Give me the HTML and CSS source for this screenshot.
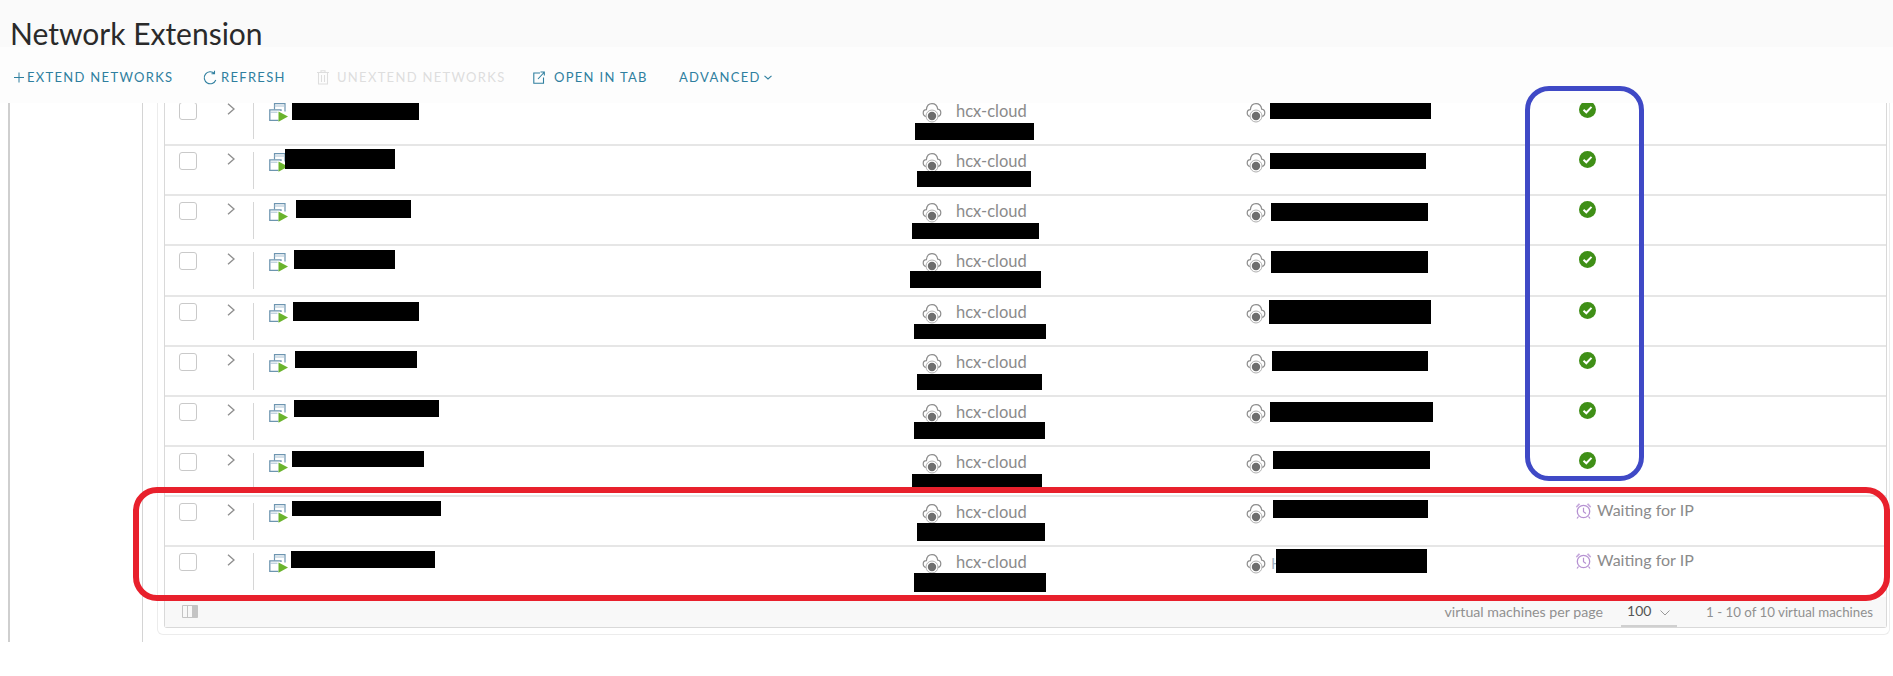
FILE: index.html
```html
<!DOCTYPE html>
<html lang="en">
<head>
<meta charset="utf-8">
<title>Network Extension</title>
<link rel="stylesheet" href="styles.css">
</head>
<body>
<svg class="defs" width="0" height="0" aria-hidden="true">
  <symbol id="i-vm" viewBox="0 0 19 19">
    <path d="M5.500 6.500V.7H16V8.500" fill="none" stroke="#6d95b0" stroke-width="1.200"/>
    <path d="M5.500 3H16" stroke="#a9c1d2" stroke-width="1"/>
    <path d="M9.500 17.300H.8V6.800H12V8" fill="none" stroke="#6d95b0" stroke-width="1.300"/>
    <path d="M.8 9.200H8.500" stroke="#a9c1d2" stroke-width="1"/>
    <path d="M9.500 8.500L19 13.500L9.500 18.800Z" fill="#6ab42d"/>
  </symbol>
  <symbol id="i-cloud" viewBox="0 0 20 20">
    <path d="M4.500 13.500C2.500 13.200 1.200 11.600 1.200 9.900C1.200 8 2.600 6.700 4.400 6.600C4.800 2.800 7.200 .7 10 .7C13 .7 15.200 2.900 15.700 6.100C17.500 6.300 18.800 7.900 18.800 9.700C18.800 11.600 17.500 13.200 15.500 13.500" fill="none" stroke="#8c8c8c" stroke-width="1.200"/>
    <circle cx="10" cy="13" r="6" fill="#fff" stroke="#b0b0b0" stroke-width="1"/>
    <circle cx="10" cy="13" r="4.200" fill="#6e6e6e"/>
  </symbol>
  <symbol id="i-check" viewBox="0 0 17 17">
    <circle cx="8.500" cy="8.500" r="8.500" fill="#3f8f17"/>
    <path d="M4.500 8.800L7.300 11.300L12.500 5.900" fill="none" stroke="#fff" stroke-width="2"/>
  </symbol>
  <symbol id="i-clock" viewBox="0 0 17 17">
    <circle cx="8.500" cy="9.500" r="6.200" fill="none" stroke="#b692d2" stroke-width="1.300"/>
    <path d="M8.500 5.800V9.800L11 11.500" fill="none" stroke="#b692d2" stroke-width="1.200"/>
    <path d="M.8 4.500L3.800 1.200L5.200 2.300L1.800 5.800ZM16.200 4.500L13.200 1.200L11.800 2.300L15.200 5.800Z" fill="#c6a9dc"/>
    <path d="M3.500 14.500L2 16.500M13.500 14.500L15 16.500" stroke="#b692d2" stroke-width="1.200"/>
  </symbol>
</svg>

<div class="page">
  <header class="title-bar"><h1 class="title">Network Extension</h1></header>

  <nav class="toolbar">
    <span class="action action-extend">
      <svg class="tool-icon plus" viewBox="0 0 11 11"><path d="M5.500 0V11M0 5.500H11"/></svg>
      EXTEND NETWORKS
    </span>
    <span class="action action-refresh">
      <svg class="tool-icon refresh" viewBox="0 0 14 15"><path d="M11.500 3.500A6 6 0 1 0 12.800 10M11.500 .8V3.800H8.500"/></svg>
      REFRESH
    </span>
    <span class="action action-off">
      <svg class="tool-icon trash" viewBox="0 0 12 15"><path d="M1.500 3V14H10.500V3M0 2.500H12M4 2.500V.8H8V2.500M4.500 5V12M7.500 5V12"/></svg>
      UNEXTEND NETWORKS
    </span>
    <span class="action action-open">
      <svg class="tool-icon open" viewBox="0 0 12 13"><path d="M7 2H.8V12.200H10.500V6.500M5 8L11 1.500M7.500 1H11.300V4.500"/></svg>
      OPEN IN TAB
    </span>
    <span class="action action-advanced">
      ADVANCED
      <svg class="tool-icon caret" viewBox="0 0 8 5"><path d="M.5 .8L4 4L7.500 .8"/></svg>
    </span>
  </nav>

  <main class="main">
    <div class="rail"></div>
    <section class="card">
      <div class="table">
        <div class="row">
          <span class="cell-select"><span class="checkbox"></span></span>
          <span class="cell-expand"><svg class="chevron" viewBox="0 0 8 12"><path d="M1 .8L7 6L1 11.200"/></svg></span>
          <span class="cell-name"><svg class="icon-vm"><use href="#i-vm"/></svg></span>
          <span class="cell-cloud"><svg class="icon-cloud"><use href="#i-cloud"/></svg><span class="cloud-name">hcx-cloud</span></span>
          <span class="cell-target"><svg class="icon-cloud"><use href="#i-cloud"/></svg></span>
          <span class="cell-status"><svg class="icon-check"><use href="#i-check"/></svg></span>
        </div>
        <div class="row">
          <span class="cell-select"><span class="checkbox"></span></span>
          <span class="cell-expand"><svg class="chevron" viewBox="0 0 8 12"><path d="M1 .8L7 6L1 11.200"/></svg></span>
          <span class="cell-name"><svg class="icon-vm"><use href="#i-vm"/></svg></span>
          <span class="cell-cloud"><svg class="icon-cloud"><use href="#i-cloud"/></svg><span class="cloud-name">hcx-cloud</span></span>
          <span class="cell-target"><svg class="icon-cloud"><use href="#i-cloud"/></svg></span>
          <span class="cell-status"><svg class="icon-check"><use href="#i-check"/></svg></span>
        </div>
        <div class="row">
          <span class="cell-select"><span class="checkbox"></span></span>
          <span class="cell-expand"><svg class="chevron" viewBox="0 0 8 12"><path d="M1 .8L7 6L1 11.200"/></svg></span>
          <span class="cell-name"><svg class="icon-vm"><use href="#i-vm"/></svg></span>
          <span class="cell-cloud"><svg class="icon-cloud"><use href="#i-cloud"/></svg><span class="cloud-name">hcx-cloud</span></span>
          <span class="cell-target"><svg class="icon-cloud"><use href="#i-cloud"/></svg></span>
          <span class="cell-status"><svg class="icon-check"><use href="#i-check"/></svg></span>
        </div>
        <div class="row">
          <span class="cell-select"><span class="checkbox"></span></span>
          <span class="cell-expand"><svg class="chevron" viewBox="0 0 8 12"><path d="M1 .8L7 6L1 11.200"/></svg></span>
          <span class="cell-name"><svg class="icon-vm"><use href="#i-vm"/></svg></span>
          <span class="cell-cloud"><svg class="icon-cloud"><use href="#i-cloud"/></svg><span class="cloud-name">hcx-cloud</span></span>
          <span class="cell-target"><svg class="icon-cloud"><use href="#i-cloud"/></svg></span>
          <span class="cell-status"><svg class="icon-check"><use href="#i-check"/></svg></span>
        </div>
        <div class="row">
          <span class="cell-select"><span class="checkbox"></span></span>
          <span class="cell-expand"><svg class="chevron" viewBox="0 0 8 12"><path d="M1 .8L7 6L1 11.200"/></svg></span>
          <span class="cell-name"><svg class="icon-vm"><use href="#i-vm"/></svg></span>
          <span class="cell-cloud"><svg class="icon-cloud"><use href="#i-cloud"/></svg><span class="cloud-name">hcx-cloud</span></span>
          <span class="cell-target"><svg class="icon-cloud"><use href="#i-cloud"/></svg></span>
          <span class="cell-status"><svg class="icon-check"><use href="#i-check"/></svg></span>
        </div>
        <div class="row">
          <span class="cell-select"><span class="checkbox"></span></span>
          <span class="cell-expand"><svg class="chevron" viewBox="0 0 8 12"><path d="M1 .8L7 6L1 11.200"/></svg></span>
          <span class="cell-name"><svg class="icon-vm"><use href="#i-vm"/></svg></span>
          <span class="cell-cloud"><svg class="icon-cloud"><use href="#i-cloud"/></svg><span class="cloud-name">hcx-cloud</span></span>
          <span class="cell-target"><svg class="icon-cloud"><use href="#i-cloud"/></svg></span>
          <span class="cell-status"><svg class="icon-check"><use href="#i-check"/></svg></span>
        </div>
        <div class="row">
          <span class="cell-select"><span class="checkbox"></span></span>
          <span class="cell-expand"><svg class="chevron" viewBox="0 0 8 12"><path d="M1 .8L7 6L1 11.200"/></svg></span>
          <span class="cell-name"><svg class="icon-vm"><use href="#i-vm"/></svg></span>
          <span class="cell-cloud"><svg class="icon-cloud"><use href="#i-cloud"/></svg><span class="cloud-name">hcx-cloud</span></span>
          <span class="cell-target"><svg class="icon-cloud"><use href="#i-cloud"/></svg></span>
          <span class="cell-status"><svg class="icon-check"><use href="#i-check"/></svg></span>
        </div>
        <div class="row">
          <span class="cell-select"><span class="checkbox"></span></span>
          <span class="cell-expand"><svg class="chevron" viewBox="0 0 8 12"><path d="M1 .8L7 6L1 11.200"/></svg></span>
          <span class="cell-name"><svg class="icon-vm"><use href="#i-vm"/></svg></span>
          <span class="cell-cloud"><svg class="icon-cloud"><use href="#i-cloud"/></svg><span class="cloud-name">hcx-cloud</span></span>
          <span class="cell-target"><svg class="icon-cloud"><use href="#i-cloud"/></svg></span>
          <span class="cell-status"><svg class="icon-check"><use href="#i-check"/></svg></span>
        </div>
        <div class="row">
          <span class="cell-select"><span class="checkbox"></span></span>
          <span class="cell-expand"><svg class="chevron" viewBox="0 0 8 12"><path d="M1 .8L7 6L1 11.200"/></svg></span>
          <span class="cell-name"><svg class="icon-vm"><use href="#i-vm"/></svg></span>
          <span class="cell-cloud"><svg class="icon-cloud"><use href="#i-cloud"/></svg><span class="cloud-name">hcx-cloud</span></span>
          <span class="cell-target"><svg class="icon-cloud"><use href="#i-cloud"/></svg></span>
          <span class="cell-status"><svg class="icon-clock"><use href="#i-clock"/></svg><span class="status-text">Waiting for IP</span></span>
        </div>
        <div class="row">
          <span class="cell-select"><span class="checkbox"></span></span>
          <span class="cell-expand"><svg class="chevron" viewBox="0 0 8 12"><path d="M1 .8L7 6L1 11.200"/></svg></span>
          <span class="cell-name"><svg class="icon-vm"><use href="#i-vm"/></svg></span>
          <span class="cell-cloud"><svg class="icon-cloud"><use href="#i-cloud"/></svg><span class="cloud-name">hcx-cloud</span></span>
          <span class="cell-target"><svg class="icon-cloud"><use href="#i-cloud"/></svg><span class="target-name">H</span></span>
          <span class="cell-status"><svg class="icon-clock"><use href="#i-clock"/></svg><span class="status-text">Waiting for IP</span></span>
        </div>
        <footer class="table-footer">
          <svg class="col-toggle" viewBox="0 0 16 13"><path class="col-frame" d="M.5 .5H15.500V12.500H.5ZM5.500 .5V12.500M10.500 .5V12.500"/><path class="col-fill" d="M10.500 .5H15.500V12.500H10.500Z"/></svg>
          <span class="per-page">virtual machines per page</span>
          <span class="page-select">100<svg class="select-caret" viewBox="0 0 10 6"><path d="M.5 .5L5 5L9.500 .5"/></svg></span>
          <span class="page-count">1 - 10 of 10 virtual machines</span>
        </footer>
      </div>
    </section>
  </main>

  <div class="redact n1"></div><div class="redact n2"></div><div class="redact n3"></div><div class="redact n4"></div><div class="redact n5"></div>
  <div class="redact n6"></div><div class="redact n7"></div><div class="redact n8"></div><div class="redact n9"></div><div class="redact n10"></div>
  <div class="redact c1"></div><div class="redact c2"></div><div class="redact c3"></div><div class="redact c4"></div><div class="redact c5"></div>
  <div class="redact c6"></div><div class="redact c7"></div><div class="redact c8"></div><div class="redact c9"></div><div class="redact c10"></div>
  <div class="redact t1"></div><div class="redact t2"></div><div class="redact t3"></div><div class="redact t4"></div><div class="redact t5"></div>
  <div class="redact t6"></div><div class="redact t7"></div><div class="redact t8"></div><div class="redact t9"></div><div class="redact t10"></div>

  <div class="mark mark-blue"></div>
  <div class="mark mark-red"></div>
</div>
</body>
</html>
```

FILE: styles.css
```css
* { box-sizing: border-box; }
html, body { margin: 0; padding: 0; background: #fff; }
.defs { position: absolute; }

.page {
  position: relative;
  width: 1893px;
  height: 676px;
  overflow: hidden;
  font-family: Lato, "Open Sans", sans-serif;
  background: #fff;
}

.title-bar {
  height: 47px;
  padding-left: 10px;
  background: #fafafa;
}
.title {
  margin: 0;
  padding-top: 16px;
  font-size: 30px;
  line-height: 34px;
  font-weight: 400;
  color: #2a2a2a;
}

.toolbar {
  position: relative;
  z-index: 1;
  display: flex;
  align-items: center;
  height: 56px;
  padding: 4px 0 0 14px;
  background: #fdfdfd;
  font-size: 13px;
  letter-spacing: 1.300px;
  color: #2f7f9f;
  white-space: nowrap;
}
.action { display: flex; align-items: center; }
.action-extend { gap: 3px; width: 189px; }
.action-refresh { gap: 4px; width: 114px; }
.action-off { gap: 8px; width: 216px; color: #dedede; }
.action-open { gap: 9px; width: 146px; }
.action-advanced { gap: 3px; }

.tool-icon { fill: none; stroke: currentColor; stroke-width: 1.100; }
.plus { width: 10px; height: 11px; }
.refresh { width: 14px; height: 15px; }
.trash { width: 12px; height: 15px; }
.open { width: 12px; height: 13px; }
.caret { width: 8px; height: 5px; }

.main {
  display: flex;
  height: 539px;
  padding-left: 8px;
}
.rail {
  width: 135px;
  border-left: 2px solid #cfcfcf;
  border-right: 1px solid #d4d4d4;
}
.card {
  flex: 1;
  align-self: flex-start;
  margin: -6.920px 3px 0 14px;
  padding: 0 2px 6px 6px;
  border: 1px solid #ececec;
  border-top: 0;
  border-radius: 0 0 6px 6px;
}

.table {
  border: 1px solid #d9d9d9;
  border-top: 0;
  border-radius: 0 0 3px 3px;
}

.row {
  display: grid;
  grid-template-columns: 62px 27px 668px 324px 329px 1fr;
  height: 50.120px;
  border-bottom: 2px solid #e6e6e6;
}
.row:nth-child(10) { border-bottom: 0; }

.cell-select { padding: 6px 0 0 14px; }
.checkbox {
  display: block;
  width: 18px;
  height: 18px;
  border: 1.500px solid #c9c9c9;
  border-radius: 3px;
  background: #fff;
}

.cell-expand { position: relative; padding-top: 7px; }
.cell-expand::after {
  content: "";
  position: absolute;
  top: 6px;
  right: 0;
  width: 1px;
  height: 37px;
  background: #d6d6d6;
}
.chevron {
  display: block;
  width: 8px;
  height: 12px;
  fill: none;
  stroke: #8f8f8f;
  stroke-width: 1.400;
}

.cell-name { padding: 7px 0 0 15px; }
.icon-vm { display: block; width: 19px; height: 19px; }

.cell-cloud, .cell-target {
  display: flex;
  align-items: center;
  align-self: start;
  height: 20px;
  margin-top: 7px;
}
.icon-cloud { display: block; flex: none; width: 20px; height: 20px; }
.cloud-name {
  margin: -4px 0 0 14px;
  font-size: 16.500px;
  color: #8b8b8b;
}
.target-name {
  margin: -2px 0 0 5px;
  font-size: 15px;
  color: #9fb2c4;
}

.cell-status { display: flex; align-items: flex-start; padding-top: 5px; }
.icon-check { display: block; width: 17px; height: 17px; margin-left: 4px; }
.icon-clock { display: block; flex: none; width: 17px; height: 17px; }
.status-text {
  margin: -2px 0 0 5px;
  font-size: 16px;
  line-height: 20px;
  color: #8b8b8b;
}

.table-footer {
  display: flex;
  align-items: center;
  height: 29.500px;
  padding: 0 13px 0 17px;
  background: #f8f8f8;
  font-size: 13.300px;
  color: #909090;
  white-space: nowrap;
}
.col-toggle { width: 16px; height: 13px; margin-right: auto; }
.col-frame { fill: none; stroke: #c4c4c4; stroke-width: 1; }
.col-fill { fill: #c4c4c4; }
.per-page { margin-right: 18px; font-size: 14.200px; }
.page-select {
  display: flex;
  align-items: center;
  align-self: stretch;
  gap: 9px;
  width: 56px;
  margin-right: 29px;
  padding-left: 6px;
  border-bottom: 2px solid #d0d0d0;
  font-size: 14px;
  color: #555;
}
.select-caret {
  width: 10px;
  height: 6px;
  margin-top: 4px;
  fill: none;
  stroke: #9a9a9a;
  stroke-width: 1;
}

/* Black redaction bars drawn over the screenshot */
.redact { position: absolute; background: #000; }
.n1 { left: 292px; top: 103px; width: 127px; height: 17px; }
.n2 { left: 285px; top: 149px; width: 110px; height: 20px; }
.n3 { left: 296px; top: 200px; width: 115px; height: 18px; }
.n4 { left: 294px; top: 250px; width: 101px; height: 19px; }
.n5 { left: 293px; top: 302px; width: 126px; height: 19px; }
.n6 { left: 295px; top: 351px; width: 122px; height: 17px; }
.n7 { left: 294px; top: 400px; width: 145px; height: 17px; }
.n8 { left: 292px; top: 451px; width: 132px; height: 16px; }
.n9 { left: 292px; top: 501px; width: 149px; height: 15px; }
.n10 { left: 291px; top: 551px; width: 144px; height: 17px; }
.c1 { left: 915px; top: 123px; width: 119px; height: 17px; }
.c2 { left: 917px; top: 171px; width: 114px; height: 16px; }
.c3 { left: 912px; top: 223px; width: 127px; height: 16px; }
.c4 { left: 910px; top: 271px; width: 131px; height: 17px; }
.c5 { left: 914px; top: 324px; width: 132px; height: 15px; }
.c6 { left: 917px; top: 374px; width: 125px; height: 16px; }
.c7 { left: 914px; top: 422px; width: 131px; height: 17px; }
.c8 { left: 912px; top: 474px; width: 130px; height: 16px; }
.c9 { left: 917px; top: 523px; width: 128px; height: 18px; }
.c10 { left: 914px; top: 573px; width: 132px; height: 19px; }
.t1 { left: 1270px; top: 102px; width: 161px; height: 17px; }
.t2 { left: 1270px; top: 153px; width: 156px; height: 16px; }
.t3 { left: 1271px; top: 203px; width: 157px; height: 18px; }
.t4 { left: 1271px; top: 251px; width: 157px; height: 22px; }
.t5 { left: 1269px; top: 300px; width: 162px; height: 24px; }
.t6 { left: 1272px; top: 351px; width: 156px; height: 20px; }
.t7 { left: 1270px; top: 402px; width: 163px; height: 20px; }
.t8 { left: 1273px; top: 451px; width: 157px; height: 18px; }
.t9 { left: 1273px; top: 500px; width: 155px; height: 18px; }
.t10 { left: 1276px; top: 549px; width: 151px; height: 24px; }

/* Hand-drawn highlight rectangles over the screenshot */
.mark { position: absolute; z-index: 2; }
.mark-blue {
  left: 1525px;
  top: 86px;
  width: 119px;
  height: 395px;
  border: 5px solid #3f49c6;
  border-radius: 24px;
}
.mark-red {
  left: 133px;
  top: 487px;
  width: 1757px;
  height: 114px;
  border: 6px solid #e8202c;
  border-radius: 24px;
}
```
